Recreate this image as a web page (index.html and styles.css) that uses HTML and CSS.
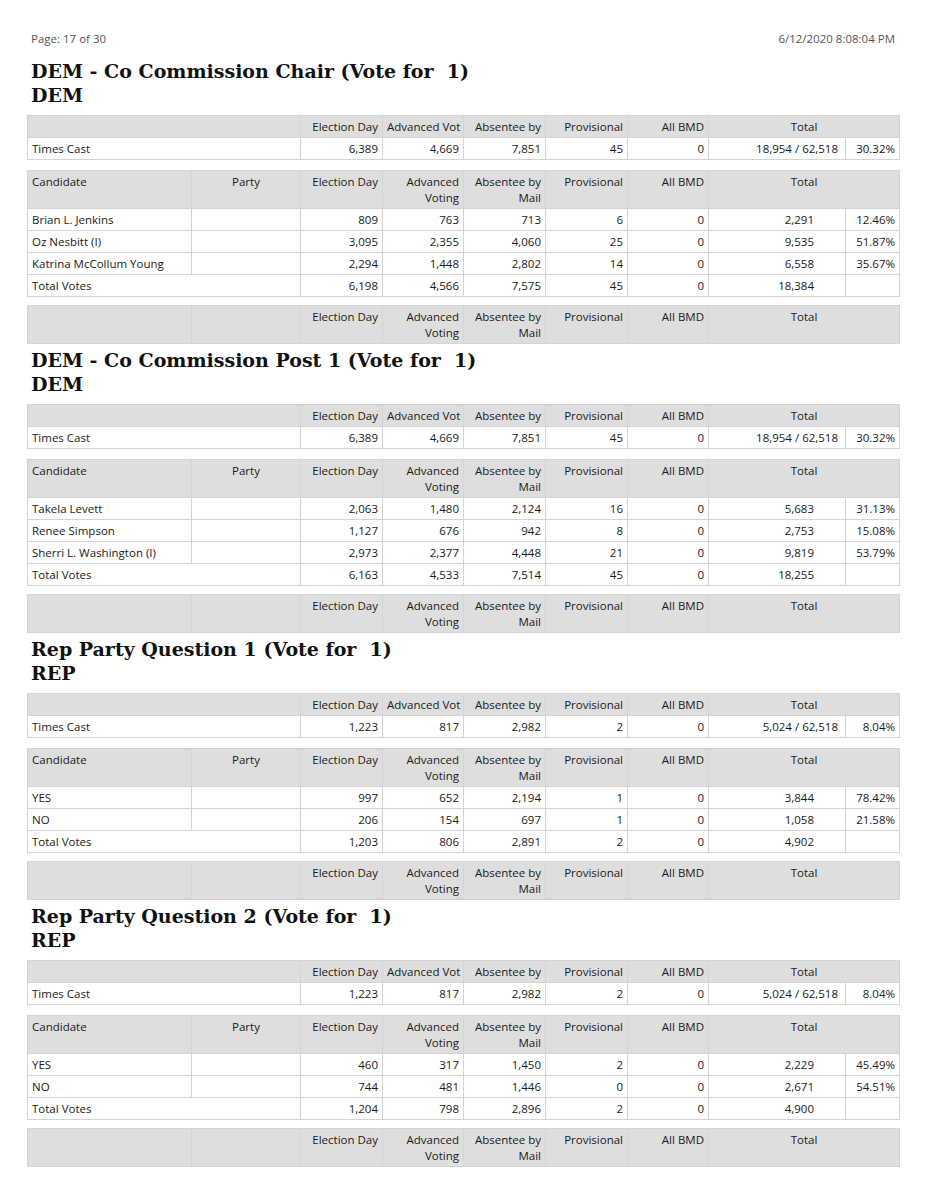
FILE: index.html
```html
<!DOCTYPE html>
<html lang="en">
<head>
<meta charset="utf-8">
<title>Election Results - Page 17 of 30</title>
<link rel="stylesheet" href="styles.css">
</head>
<body>
<div class="page">
  <div class="page-header">
    <span>Page: 17 of 30</span>
    <span>6/12/2020 8:08:04 PM</span>
  </div>

  <!-- Section 1 -->
  <section class="contest">
    <h2 class="contest-title">DEM - Co Commission Chair (Vote for&nbsp; 1)<br>DEM</h2>
    <table class="grid cast">
      <colgroup><col class="c-cand"><col class="c-party"><col class="c-n"><col class="c-n2"><col class="c-n"><col class="c-n"><col class="c-n2"><col class="c-tot"><col class="c-pct"></colgroup>
      <tr class="hd1"><th colspan="2"></th><th>Election Day</th><th>Advanced Vot</th><th>Absentee by</th><th>Provisional</th><th>All BMD</th><th colspan="2" class="ctr">Total</th></tr>
      <tr><td colspan="2" class="lbl">Times Cast</td><td>6,389</td><td>4,669</td><td>7,851</td><td>45</td><td>0</td><td class="tc">18,954 / 62,518</td><td>30.32%</td></tr>
    </table>
    <table class="grid cands">
      <colgroup><col class="c-cand"><col class="c-party"><col class="c-n"><col class="c-n2"><col class="c-n"><col class="c-n"><col class="c-n2"><col class="c-tot"><col class="c-pct"></colgroup>
      <tr class="hd2"><th class="lbl">Candidate</th><th class="ctr">Party</th><th>Election Day</th><th>Advanced Voting</th><th>Absentee by Mail</th><th>Provisional</th><th>All BMD</th><th colspan="2" class="ctr">Total</th></tr>
      <tr><td class="lbl">Brian L. Jenkins</td><td></td><td>809</td><td>763</td><td>713</td><td>6</td><td>0</td><td class="tot">2,291</td><td>12.46%</td></tr>
      <tr><td class="lbl">Oz Nesbitt (I)</td><td></td><td>3,095</td><td>2,355</td><td>4,060</td><td>25</td><td>0</td><td class="tot">9,535</td><td>51.87%</td></tr>
      <tr><td class="lbl">Katrina McCollum Young</td><td></td><td>2,294</td><td>1,448</td><td>2,802</td><td>14</td><td>0</td><td class="tot">6,558</td><td>35.67%</td></tr>
      <tr><td colspan="2" class="lbl">Total Votes</td><td>6,198</td><td>4,566</td><td>7,575</td><td>45</td><td>0</td><td class="tot">18,384</td><td></td></tr>
    </table>
    <table class="grid foot">
      <colgroup><col class="c-cand"><col class="c-party"><col class="c-n"><col class="c-n2"><col class="c-n"><col class="c-n"><col class="c-n2"><col class="c-tot"><col class="c-pct"></colgroup>
      <tr class="hd2"><th></th><th></th><th>Election Day</th><th>Advanced Voting</th><th>Absentee by Mail</th><th>Provisional</th><th>All BMD</th><th colspan="2" class="ctr">Total</th></tr>
    </table>
  </section>

  <!-- Section 2 -->
  <section class="contest">
    <h2 class="contest-title">DEM - Co Commission Post 1 (Vote for&nbsp; 1)<br>DEM</h2>
    <table class="grid cast">
      <colgroup><col class="c-cand"><col class="c-party"><col class="c-n"><col class="c-n2"><col class="c-n"><col class="c-n"><col class="c-n2"><col class="c-tot"><col class="c-pct"></colgroup>
      <tr class="hd1"><th colspan="2"></th><th>Election Day</th><th>Advanced Vot</th><th>Absentee by</th><th>Provisional</th><th>All BMD</th><th colspan="2" class="ctr">Total</th></tr>
      <tr><td colspan="2" class="lbl">Times Cast</td><td>6,389</td><td>4,669</td><td>7,851</td><td>45</td><td>0</td><td class="tc">18,954 / 62,518</td><td>30.32%</td></tr>
    </table>
    <table class="grid cands">
      <colgroup><col class="c-cand"><col class="c-party"><col class="c-n"><col class="c-n2"><col class="c-n"><col class="c-n"><col class="c-n2"><col class="c-tot"><col class="c-pct"></colgroup>
      <tr class="hd2"><th class="lbl">Candidate</th><th class="ctr">Party</th><th>Election Day</th><th>Advanced Voting</th><th>Absentee by Mail</th><th>Provisional</th><th>All BMD</th><th colspan="2" class="ctr">Total</th></tr>
      <tr><td class="lbl">Takela Levett</td><td></td><td>2,063</td><td>1,480</td><td>2,124</td><td>16</td><td>0</td><td class="tot">5,683</td><td>31.13%</td></tr>
      <tr><td class="lbl">Renee Simpson</td><td></td><td>1,127</td><td>676</td><td>942</td><td>8</td><td>0</td><td class="tot">2,753</td><td>15.08%</td></tr>
      <tr><td class="lbl">Sherri L. Washington (I)</td><td></td><td>2,973</td><td>2,377</td><td>4,448</td><td>21</td><td>0</td><td class="tot">9,819</td><td>53.79%</td></tr>
      <tr><td colspan="2" class="lbl">Total Votes</td><td>6,163</td><td>4,533</td><td>7,514</td><td>45</td><td>0</td><td class="tot">18,255</td><td></td></tr>
    </table>
    <table class="grid foot">
      <colgroup><col class="c-cand"><col class="c-party"><col class="c-n"><col class="c-n2"><col class="c-n"><col class="c-n"><col class="c-n2"><col class="c-tot"><col class="c-pct"></colgroup>
      <tr class="hd2"><th></th><th></th><th>Election Day</th><th>Advanced Voting</th><th>Absentee by Mail</th><th>Provisional</th><th>All BMD</th><th colspan="2" class="ctr">Total</th></tr>
    </table>
  </section>

  <!-- Section 3 -->
  <section class="contest">
    <h2 class="contest-title">Rep Party Question 1 (Vote for&nbsp; 1)<br>REP</h2>
    <table class="grid cast">
      <colgroup><col class="c-cand"><col class="c-party"><col class="c-n"><col class="c-n2"><col class="c-n"><col class="c-n"><col class="c-n2"><col class="c-tot"><col class="c-pct"></colgroup>
      <tr class="hd1"><th colspan="2"></th><th>Election Day</th><th>Advanced Vot</th><th>Absentee by</th><th>Provisional</th><th>All BMD</th><th colspan="2" class="ctr">Total</th></tr>
      <tr><td colspan="2" class="lbl">Times Cast</td><td>1,223</td><td>817</td><td>2,982</td><td>2</td><td>0</td><td class="tc">5,024 / 62,518</td><td>8.04%</td></tr>
    </table>
    <table class="grid cands">
      <colgroup><col class="c-cand"><col class="c-party"><col class="c-n"><col class="c-n2"><col class="c-n"><col class="c-n"><col class="c-n2"><col class="c-tot"><col class="c-pct"></colgroup>
      <tr class="hd2"><th class="lbl">Candidate</th><th class="ctr">Party</th><th>Election Day</th><th>Advanced Voting</th><th>Absentee by Mail</th><th>Provisional</th><th>All BMD</th><th colspan="2" class="ctr">Total</th></tr>
      <tr><td class="lbl">YES</td><td></td><td>997</td><td>652</td><td>2,194</td><td>1</td><td>0</td><td class="tot">3,844</td><td>78.42%</td></tr>
      <tr><td class="lbl">NO</td><td></td><td>206</td><td>154</td><td>697</td><td>1</td><td>0</td><td class="tot">1,058</td><td>21.58%</td></tr>
      <tr><td colspan="2" class="lbl">Total Votes</td><td>1,203</td><td>806</td><td>2,891</td><td>2</td><td>0</td><td class="tot">4,902</td><td></td></tr>
    </table>
    <table class="grid foot">
      <colgroup><col class="c-cand"><col class="c-party"><col class="c-n"><col class="c-n2"><col class="c-n"><col class="c-n"><col class="c-n2"><col class="c-tot"><col class="c-pct"></colgroup>
      <tr class="hd2"><th></th><th></th><th>Election Day</th><th>Advanced Voting</th><th>Absentee by Mail</th><th>Provisional</th><th>All BMD</th><th colspan="2" class="ctr">Total</th></tr>
    </table>
  </section>

  <!-- Section 4 -->
  <section class="contest">
    <h2 class="contest-title">Rep Party Question 2 (Vote for&nbsp; 1)<br>REP</h2>
    <table class="grid cast">
      <colgroup><col class="c-cand"><col class="c-party"><col class="c-n"><col class="c-n2"><col class="c-n"><col class="c-n"><col class="c-n2"><col class="c-tot"><col class="c-pct"></colgroup>
      <tr class="hd1"><th colspan="2"></th><th>Election Day</th><th>Advanced Vot</th><th>Absentee by</th><th>Provisional</th><th>All BMD</th><th colspan="2" class="ctr">Total</th></tr>
      <tr><td colspan="2" class="lbl">Times Cast</td><td>1,223</td><td>817</td><td>2,982</td><td>2</td><td>0</td><td class="tc">5,024 / 62,518</td><td>8.04%</td></tr>
    </table>
    <table class="grid cands">
      <colgroup><col class="c-cand"><col class="c-party"><col class="c-n"><col class="c-n2"><col class="c-n"><col class="c-n"><col class="c-n2"><col class="c-tot"><col class="c-pct"></colgroup>
      <tr class="hd2"><th class="lbl">Candidate</th><th class="ctr">Party</th><th>Election Day</th><th>Advanced Voting</th><th>Absentee by Mail</th><th>Provisional</th><th>All BMD</th><th colspan="2" class="ctr">Total</th></tr>
      <tr><td class="lbl">YES</td><td></td><td>460</td><td>317</td><td>1,450</td><td>2</td><td>0</td><td class="tot">2,229</td><td>45.49%</td></tr>
      <tr><td class="lbl">NO</td><td></td><td>744</td><td>481</td><td>1,446</td><td>0</td><td>0</td><td class="tot">2,671</td><td>54.51%</td></tr>
      <tr><td colspan="2" class="lbl">Total Votes</td><td>1,204</td><td>798</td><td>2,896</td><td>2</td><td>0</td><td class="tot">4,900</td><td></td></tr>
    </table>
    <table class="grid foot">
      <colgroup><col class="c-cand"><col class="c-party"><col class="c-n"><col class="c-n2"><col class="c-n"><col class="c-n"><col class="c-n2"><col class="c-tot"><col class="c-pct"></colgroup>
      <tr class="hd2"><th></th><th></th><th>Election Day</th><th>Advanced Voting</th><th>Absentee by Mail</th><th>Provisional</th><th>All BMD</th><th colspan="2" class="ctr">Total</th></tr>
    </table>
  </section>
</div>
</body>
</html>
```

FILE: styles.css
```css
html, body {
  margin: 0;
  padding: 0;
  background: #ffffff;
}

.page {
  width: 872px;
  padding: 31px 28px 0 27px;
  font-family: "Open Sans", "Liberation Sans", sans-serif;
  font-size: 11.5px;
  color: #1a1a1a;
}

.page-header {
  display: flex;
  justify-content: space-between;
  padding: 0 4px;
  line-height: 16px;
  color: #555555;
}

.contest {
  margin-bottom: 4px;
}

.contest:first-of-type {
  margin-top: 12px;
}

.contest-title {
  margin: 0 0 8px 0;
  padding-left: 4px;
  font-family: "DejaVu Serif", "Liberation Serif", serif;
  font-weight: bold;
  font-size: 19px;
  line-height: 24px;
  color: #111111;
}

.grid {
  width: 872px;
  table-layout: fixed;
  border-collapse: collapse;
}

.c-cand { width: 164px; }
.c-party { width: 109px; }
.c-n { width: 82px; }
.c-n2 { width: 81px; }
.c-tot { width: 137px; }
.c-pct { width: 54px; }

.grid th,
.grid td {
  border: 1px solid #d4d4d4;
  padding: 0 4px 0 4px;
  text-align: right;
  overflow: hidden;
  white-space: nowrap;
}

.grid th {
  background: #dedede;
  font-weight: normal;
  vertical-align: top;
  padding-top: 3px;
  padding-bottom: 2px;
  line-height: 16px;
}

.grid .hd2 th {
  white-space: normal;
  height: 32px;
}

.grid td {
  line-height: 21px;
  background: #ffffff;
}

.grid .lbl {
  text-align: left;
}

.grid .ctr {
  text-align: center;
}

.grid td.tot {
  padding-right: 31px;
}

.grid td.tc {
  padding-right: 7px;
}

.cast {
  margin-bottom: 10px;
}

.cands {
  margin-bottom: 8px;
}
```
